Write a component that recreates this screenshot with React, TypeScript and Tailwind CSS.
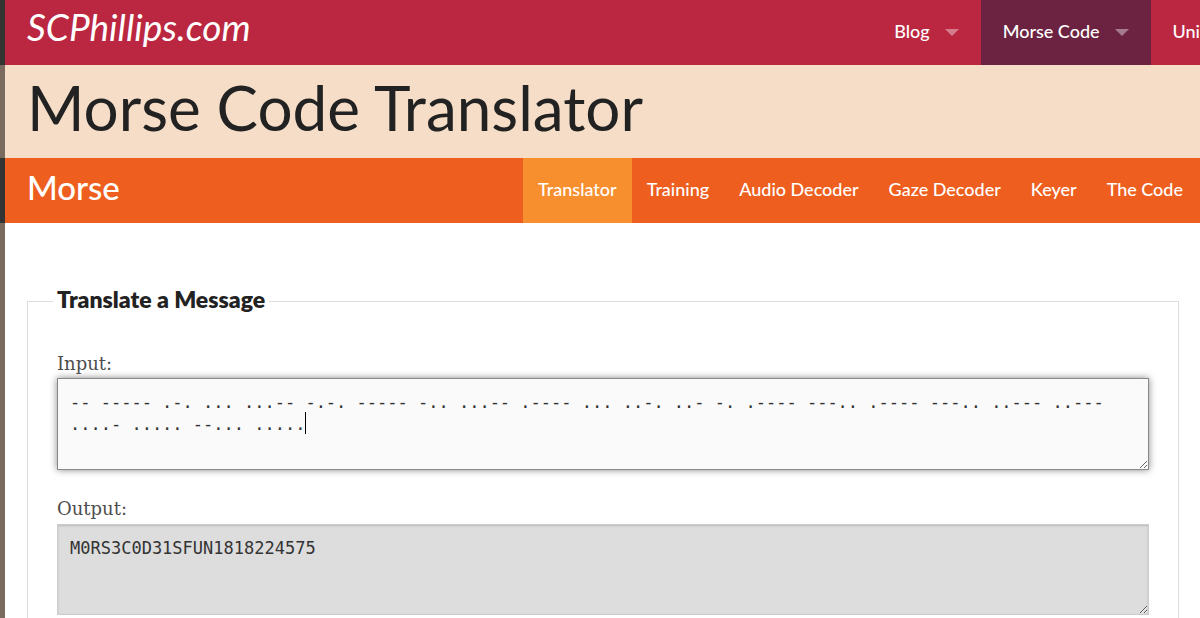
import { useState } from 'react'

const MORSE =
  '-- ----- .-. ... ...-- -.-. ----- -.. ...-- .---- ... ..-. ..- -. .---- ---.. .---- ---.. ..--- ..--- ....- ..... --... .....'

const sections = [
  { label: 'Blog', menu: true, active: false },
  { label: 'Morse Code', menu: true, active: true },
  { label: 'Uni', menu: false, active: false },
]

const pages = ['Translator', 'Training', 'Audio Decoder', 'Gaze Decoder', 'Keyer', 'The Code']

export default function App() {
  const [message, setMessage] = useState(MORSE)

  return (
    <div className="flex min-h-screen flex-col bg-white font-['Lato',sans-serif] text-[#222]">
      <TopBar />
      <div className="h-[93px] border-l-[5px] border-[#7b6b5e] bg-[#f5ddc7] px-[22px]">
        <h1 className="text-[62px] leading-[84px] whitespace-nowrap">Morse Code Translator</h1>
      </div>
      <SubNav />

      <main className="flex flex-1 flex-col border-l-[5px] border-[#7b6b5e] pt-[60px] pr-[21px] pl-[22px]">
        <fieldset className="min-w-0 flex-1 border border-b-0 border-[#ddd] px-[29px]">
          <legend className="-ml-1 px-1 pb-1 text-[23px] leading-8 font-extrabold">
            Translate a Message
          </legend>

          <label htmlFor="input" className="mt-8 block font-['DejaVu_Serif',serif] text-lg leading-[26px] text-[#4d4d4d]">
            Input:
          </label>
          <div className="relative mt-px">
            <textarea
              id="input"
              value={message}
              onChange={(e) => setMessage(e.target.value)}
              spellCheck={false}
              className="block h-[92px] w-full border border-[#888] bg-[#fafafa] px-3 py-3 font-['DejaVu_Sans_Mono',monospace] text-[17px] leading-[22px] text-[#333] shadow-[0_0_7px_#888] outline-none"
            />
            {/* Text caret */}
            <span className="absolute top-[34px] left-[248px] h-[22px] w-px bg-black" />
          </div>

          <label htmlFor="output" className="mt-[26px] block font-['DejaVu_Serif',serif] text-lg leading-[26px] text-[#4d4d4d]">
            Output:
          </label>
          <textarea
            id="output"
            readOnly
            value="M0RS3C0D31SFUN1818224575"
            className="mt-[2px] block h-[91px] w-full border border-[#ccc] bg-[#ddd] px-3 py-3 font-['DejaVu_Sans_Mono',monospace] text-[17px] leading-[22px] text-[#333] shadow-[inset_0_1px_2px_#bbb] outline-none"
          />
        </fieldset>
      </main>
    </div>
  )
}

function TopBar() {
  return (
    <header className="flex h-[65px] justify-between border-l-[5px] border-[#333] bg-[#bb2740] pl-[22px] text-white">
      <a href="#" className="font-['Lato',cursive] text-[37px] leading-[54px] italic">
        SCPhillips.com
      </a>
      <nav className="flex text-lg leading-[63px] font-medium whitespace-nowrap">
        {sections.map((s) => (
          <a
            key={s.label}
            href="#"
            className={`flex pl-[22px] ${s.active ? 'bg-[#6b2341]' : ''} ${s.menu ? 'pr-[22px]' : ''}`}
          >
            {s.label}
            {s.menu && (
              <svg viewBox="0 0 14 7" className="mt-[29px] ml-[15px] h-[7px] w-[14px] fill-white/40">
                <path d="M0 0h14L7 7z" />
              </svg>
            )}
          </a>
        ))}
      </nav>
    </header>
  )
}

function SubNav() {
  return (
    <div className="flex h-[65px] justify-between border-l-[5px] border-[#333] bg-[#ee5f1f] pr-[2px] pl-[22px] text-white">
      <h2 className="text-[33px] leading-[59px] font-medium">Morse</h2>
      <nav className="flex text-lg leading-[63px] font-medium whitespace-nowrap">
        {pages.map((page, i) => (
          <a key={page} href="#" className={`px-[15px] ${i === 0 ? 'bg-[#f78f2f]' : ''}`}>
            {page}
          </a>
        ))}
      </nav>
    </div>
  )
}
